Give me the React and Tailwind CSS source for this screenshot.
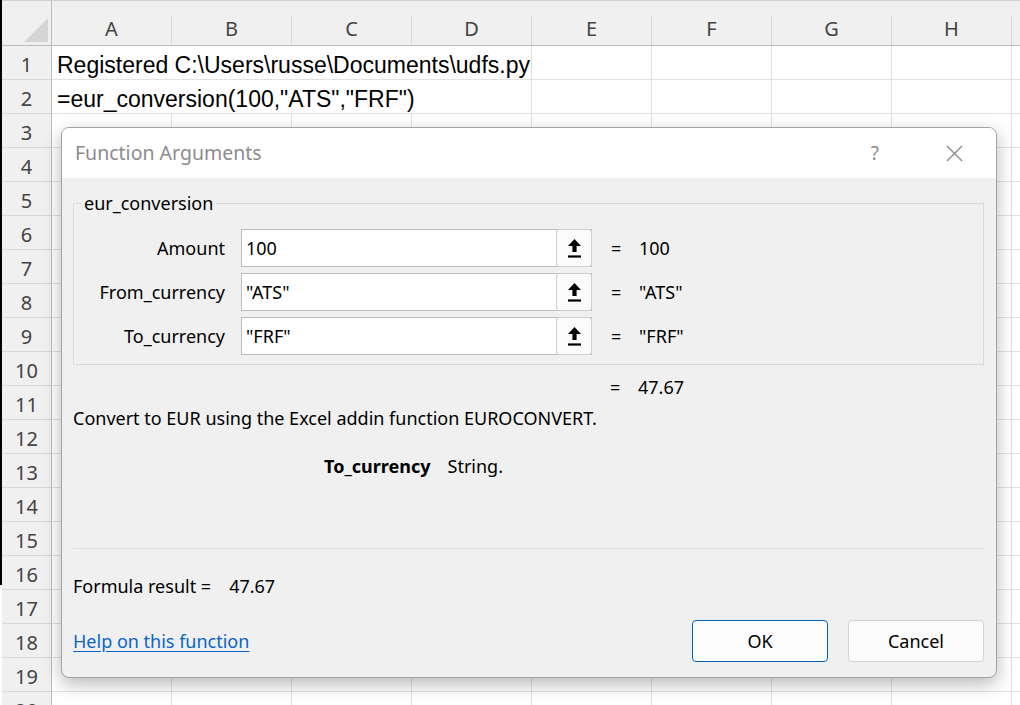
const COLS = ['A', 'B', 'C', 'D', 'E', 'F', 'G', 'H'];
const ROWS = Array.from({ length: 20 }, (_, i) => i + 1);

const ui = { fontFamily: '"Noto Sans", "Open Sans", sans-serif' };
const cellFont = { fontFamily: '"Liberation Sans", Arial, sans-serif' };

function RefIcon() {
  // range picker glyph: bold up arrow over a bar
  return (
    <svg width="13" height="19" viewBox="0 0 13 19" aria-hidden="true">
      <path d="M6.5 0 L13 7 H8.6 V13 H4.4 V7 H0 Z" fill="#000" />
      <rect x="0" y="16.4" width="13" height="2.2" fill="#000" />
    </svg>
  );
}

function ArgRow({ label, value, result }) {
  return (
    <div className="flex h-[38px] items-center">
      <div className="w-[151px] text-right text-[18px] text-black">{label}</div>
      <div className="ml-[16px] flex h-[38px] w-[351px] items-center border border-[#bdbdbd] bg-white">
        <span className="flex-1 pl-[4px] text-[18px] text-black">{value}</span>
        <span className="mr-[-1px] flex h-[38px] w-[36px] items-center justify-center rounded-[3px] border border-[#cfcfcf] bg-[#fbfbfb]">
          <RefIcon />
        </span>
      </div>
      <span className="ml-[19px] w-[28px] text-[18px]">=</span>
      <span className="text-[18px]">{result}</span>
    </div>
  );
}

function Sheet() {
  return (
    <div className="flex h-[705px] w-[1020px] overflow-hidden bg-white">
      <div className="h-[585px] w-[2px] shrink-0 bg-black" />
      <div className="flex flex-col">
        {/* column headers */}
        <div className="flex h-[46px] shrink-0 border-b border-t border-b-[#bcbcbc] border-t-[#d0d0d0] bg-[#f0f0f0]" style={ui}>
          <div className="relative w-[50px] shrink-0 border-r border-[#bcbcbc]">
            <div className="absolute bottom-[3px] right-[3px] h-0 w-0 border-b-[24px] border-l-[24px] border-b-[#d5d5d5] border-l-transparent" />
          </div>
          {COLS.map((c) => (
            <div key={c} className="flex w-[120px] shrink-0 items-center justify-center pt-[12px] text-[20px] text-[#444]">
              <span className="flex-1 text-center">{c}</span>
              <span className="h-[30px] w-px self-end bg-[#d8d8d8]" />
            </div>
          ))}
          <div className="w-[20px] shrink-0" />
        </div>
        {ROWS.map((r) => (
          <div key={r} className="flex h-[34px] shrink-0">
            <div className="flex w-[50px] shrink-0 items-center justify-center border-b border-r border-[#d8d8d8] border-r-[#bcbcbc] bg-[#f0f0f0] pt-[5px] text-[20px] text-[#444]" style={ui}>
              {r}
            </div>
            {r <= 2 ? (
              <>
                <div className="flex w-[480px] shrink-0 items-center whitespace-nowrap border-b border-r border-[#e1e1e1] pl-[5px] pt-[5px] text-[23px] text-black" style={cellFont}>
                  {r === 1 ? 'Registered C:\\Users\\russe\\Documents\\udfs.py' : '=eur_conversion(100,"ATS","FRF")'}
                </div>
                {COLS.slice(4).map((c) => (
                  <div key={c} className="w-[120px] shrink-0 border-b border-r border-[#e1e1e1]" />
                ))}
              </>
            ) : (
              COLS.map((c) => <div key={c} className="w-[120px] shrink-0 border-b border-r border-[#e1e1e1]" />)
            )}
            <div className="w-[20px] shrink-0 border-b border-[#e1e1e1]" />
          </div>
        ))}
      </div>
    </div>
  );
}

function Dialog() {
  return (
    <div
      className="absolute left-[61px] top-[127px] w-[936px] overflow-hidden rounded-[8px] border border-[#a3a3a3] bg-[#f0f0f0] text-black shadow-[0_6px_18px_rgba(0,0,0,0.28)]"
      style={ui}
    >
      <div className="flex h-[50px] items-center bg-white pl-[13px] pr-[33px]">
        <span className="flex-1 text-[19.5px] text-[#8c8c8c]">Function Arguments</span>
        <span className="mr-[67px] text-[19px] text-[#8c8c8c]">?</span>
        <svg width="17" height="17" viewBox="0 0 17 17" aria-hidden="true">
          <path d="M1 1 L16 16 M16 1 L1 16" stroke="#8a8a8a" strokeWidth="1.4" />
        </svg>
      </div>

      <div className="pb-[15px] pl-[11px] pr-[12px] pt-[25px]">
        <div className="relative h-[162px] border border-[#dadada] pt-[25px]">
          <span className="absolute left-[7px] top-[-13px] bg-[#f0f0f0] px-[3px] text-[18px] leading-[24px]">eur_conversion</span>
          <div className="flex flex-col gap-[6px]">
            <ArgRow label="Amount" value="100" result="100" />
            <ArgRow label="From_currency" value={'"ATS"'} result={'"ATS"'} />
            <ArgRow label="To_currency" value={'"FRF"'} result={'"FRF"'} />
          </div>
        </div>

        <div className="mt-[10px] flex h-[24px] items-center pl-[537px] text-[18px]">
          <span className="w-[28px]">=</span>
          <span>47.67</span>
        </div>

        <div className="mt-[8px] flex h-[22px] items-center text-[18px]">
          Convert to EUR using the Excel addin function EUROCONVERT.
        </div>

        <div className="mt-[26px] flex h-[22px] items-center pl-[251px] text-[18px]">
          <span className="font-bold">To_currency</span>
          <span className="ml-[17px]">String.</span>
        </div>

        <div className="mt-[71px] h-px bg-[#dcdcdc]" />

        <div className="mt-[26px] flex h-[22px] items-center text-[18px]">
          <span>Formula result =</span>
          <span className="ml-[18px]">47.67</span>
        </div>

        <div className="mt-[23px] flex h-[42px] items-center">
          <a className="flex-1 text-[18px] text-[#0a64c8] underline underline-offset-[3px]">Help on this function</a>
          <button className="h-[42px] w-[136px] rounded-[4px] border border-[#005fb8] bg-[#fdfdfd] text-[18px]">OK</button>
          <button className="ml-[20px] h-[42px] w-[136px] rounded-[4px] border border-[#d2d2d2] bg-[#fbfbfb] text-[18px]">Cancel</button>
        </div>
      </div>
    </div>
  );
}

export default function App() {
  return (
    <div className="relative h-[705px] w-[1020px] overflow-hidden">
      <Sheet />
      <Dialog />
    </div>
  );
}
